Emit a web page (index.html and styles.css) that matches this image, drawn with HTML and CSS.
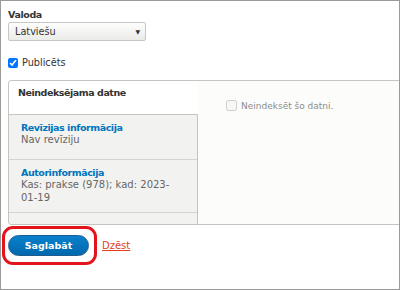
FILE: index.html
```html
<!DOCTYPE html>
<html lang="lv">
<head>
    <meta charset="UTF-8">
    <title>Datnes rediģēšana</title>
    <link rel="stylesheet" href="styles.css">
</head>
<body>
    <div class="frame">
        <div class="form-item">
            <label class="form-label" for="langcode">Valoda</label>
            <div class="select">
                <span class="select-value" id="langcode">Latviešu</span>
                <span class="select-arrow">&#9660;</span>
            </div>
        </div>

        <div class="form-check">
            <input type="checkbox" id="status" checked>
            <label for="status">Publicēts</label>
        </div>

        <div class="vertical-tabs">
            <ul class="tabs-list">
                <li class="tab-item selected">
                    <a class="tab-title" href="#">Neindeksējama datne</a>
                    <span class="tab-summary">&nbsp;</span>
                </li>
                <li class="tab-item">
                    <a class="tab-title" href="#">Revīzijas informācija</a>
                    <span class="tab-summary">Nav revīziju</span>
                </li>
                <li class="tab-item">
                    <a class="tab-title" href="#">Autorinformācija</a>
                    <span class="tab-summary">Kas: prakse (978); kad: 2023-<wbr>01-19</span>
                </li>
            </ul>
            <div class="tabs-pane">
                <div class="form-check disabled">
                    <input type="checkbox" id="noindex" disabled>
                    <label for="noindex">Neindeksēt šo datni.</label>
                </div>
            </div>
        </div>

        <div class="form-actions">
            <span class="highlight">
                <button class="button-primary" type="submit">Saglabāt</button>
            </span>
            <a class="link-delete" href="#">Dzēst</a>
        </div>
    </div>
</body>
</html>
```

FILE: styles.css
```css
html, body {
    margin: 0;
    padding: 0;
}
body {
    font-family: 'DejaVu Sans', Verdana, sans-serif;
    font-size: 9.7px;
    color: #333;
    background-color: #fff;
}
.frame {
    box-sizing: border-box;
    width: 400px;
    height: 290px;
    border: 1px solid #9a9a9a;
    padding: 7px 0 0 7px;
    overflow: hidden;
}
.form-label {
    display: block;
    font-weight: bold;
    font-size: 9.5px;
    letter-spacing: -0.4px;
    line-height: 13px;
    margin-bottom: 1px;
}
.select {
    box-sizing: border-box;
    width: 138px;
    height: 19px;
    display: flex;
    align-items: center;
    justify-content: space-between;
    padding: 0 5px 0 6px;
    border: 1px solid #c6c6c6;
    border-radius: 2px;
    background: linear-gradient(#fdfdfc, #ebebe8);
    color: #333;
}
.select-arrow {
    font-size: 6px;
    color: #333;
}
.form-check {
    display: flex;
    align-items: center;
    margin-top: 15px;
    line-height: 13px;
}
.form-check input {
    width: 10px;
    height: 10px;
    margin: 0 4px 0 0;
}
.vertical-tabs {
    display: flex;
    margin-top: 11px;
    height: 145px;
    box-sizing: border-box;
    border: 1px solid #c4c4c0;
    border-right: none;
    border-radius: 4px 0 0 4px;
    overflow: hidden;
}
.tabs-list {
    list-style: none;
    margin: 0;
    padding: 0;
    width: 188px;
    flex: none;
    background-color: #f2f2f0;
    border-right: 1px solid #c4c4c0;
}
.tab-item {
    display: block;
    box-sizing: border-box;
    min-height: 45px;
    padding: 6px 12px 8px;
    border-bottom: 1px solid #d4d4d0;
    line-height: 13px;
}
.tab-item.selected {
    min-height: 34px;
    background-color: #fff;
    padding: 5px 9px 2px;
    border-bottom: 1px solid #c4c4c0;
    margin-right: -1px;
}
.tab-title {
    display: block;
    color: #0074bd;
    font-weight: bold;
    font-size: 9.5px;
    letter-spacing: -0.45px;
    text-decoration: none;
}
.selected .tab-title {
    color: #333;
}
.tab-summary {
    display: block;
    color: #666;
    font-size: 10px;
    line-height: 12.5px;
}
.tabs-pane {
    flex: 1;
    background-color: #fcfcfa;
    padding: 16px 0 0 28px;
}
.tabs-pane .form-check {
    margin-top: 0;
}
.tabs-pane .form-check label {
    font-size: 9px;
    padding-top: 3px;
}
.tabs-pane .form-check input {
    width: 11px;
    height: 11px;
}
.form-check.disabled label {
    color: #8c8c8c;
}
.form-actions {
    display: flex;
    align-items: center;
    margin-top: 1px;
    margin-left: -6px;
}
.highlight {
    display: inline-block;
    border: 3px solid #e3141b;
    border-radius: 11px;
    padding: 6px 5px 6px 3px;
}
.button-primary {
    display: block;
    width: 81px;
    height: 21px;
    border: 1px solid #1e5c90;
    border-radius: 11px;
    background: linear-gradient(#0a80cc, #0068ad);
    color: #fff;
    font-family: 'DejaVu Sans', Verdana, sans-serif;
    font-weight: bold;
    font-size: 9.5px;
    padding: 0;
    cursor: pointer;
}
.link-delete {
    margin-left: 5px;
    color: #e0401c;
    font-size: 10px;
    text-decoration: underline;
}
```
